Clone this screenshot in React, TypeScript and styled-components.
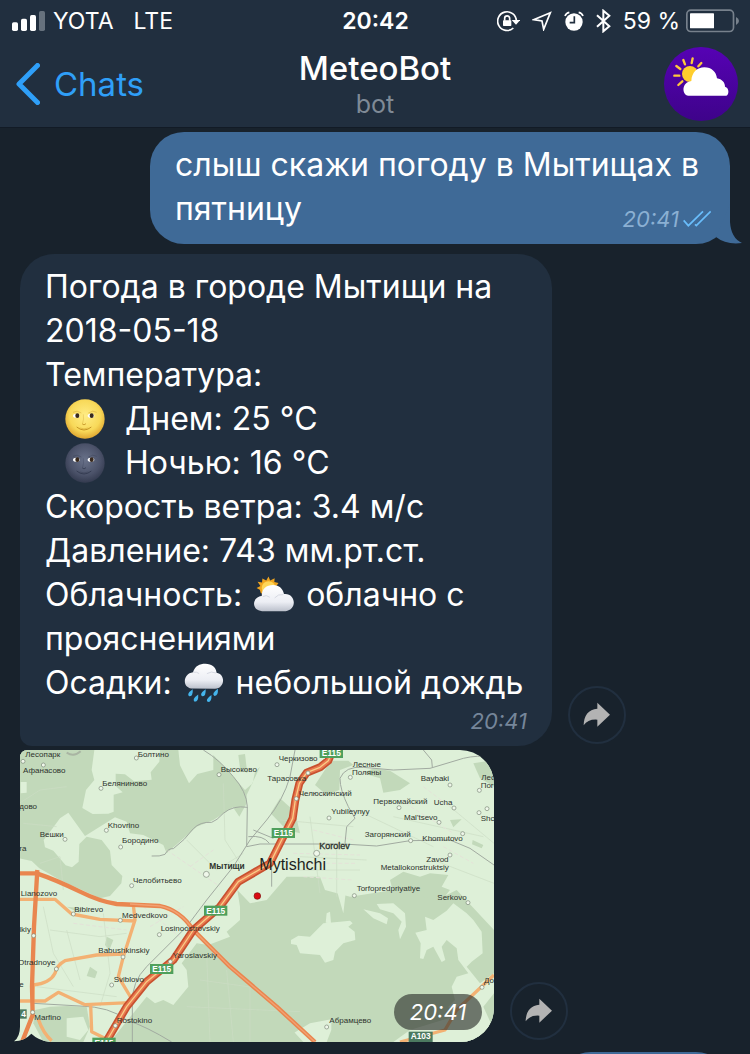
import React from "react";
import styled, { createGlobalStyle } from "styled-components";

const GlobalStyle = createGlobalStyle`
  * { box-sizing: border-box; }
  body {
    margin: 0;
    background: #18222c;
    color: #fff;
    font-family: Inter, "Noto Sans", sans-serif;
  }
  button { font: inherit; }
`;

const Screen = styled.div`
  display: flex;
  flex-direction: column;
  height: 100vh;
  overflow: hidden;
`;

const TopBar = styled.header`
  flex: none;
  background: #212f3f;
  border-bottom: 1px solid #121b26;
`;

const StatusBar = styled.div`
  display: grid;
  grid-template-columns: 1fr auto 1fr;
  align-items: center;
  height: 41px;
  padding: 0 11px 0 12px;
  font-size: 23px;
  line-height: 32px;
`;

const StatusGroup = styled.div<{ $end?: boolean }>`
  display: flex;
  align-items: center;
  justify-content: ${(p) => (p.$end ? "flex-end" : "flex-start")};
  gap: ${(p) => (p.$end ? 12 : 8)}px;
  white-space: nowrap;
`;

const Network = styled.span`
  margin-left: 12px;
`;

const Charge = styled.span`
  display: flex;
  align-items: center;
  gap: 6px;
`;

const Clock = styled.time`
  font-weight: 600;
`;

const NavBar = styled.nav`
  display: grid;
  grid-template-columns: 1fr auto 1fr;
  align-items: center;
  height: 86px;
  padding: 0 12px;
`;

const BackLink = styled.a`
  display: flex;
  align-items: center;
  gap: 14px;
  padding-left: 4px;
  color: #2f9ff8;
  font-size: 33px;
  line-height: 40px;
  text-decoration: none;
`;

const Heading = styled.div`
  text-align: center;
`;

const Title = styled.h1`
  margin: 0;
  font-size: 33px;
  line-height: 40px;
  font-weight: 500;
`;

const Subtitle = styled.p`
  margin: 0;
  color: #7f8a96;
  font-size: 25px;
  line-height: 32px;
`;

const AvatarButton = styled.button`
  justify-self: end;
  display: block;
  width: 74px;
  height: 74px;
  padding: 0;
  border: 0;
  border-radius: 50%;
  overflow: hidden;
  background: linear-gradient(#5602b4, #3e038a);
`;

const Chat = styled.main`
  flex: 1;
  min-height: 0;
  display: flex;
  flex-direction: column;
  padding: 4px 20px 0;
  overflow: hidden;
`;

const MessageRow = styled.div<{ $mine?: boolean; $gap?: number }>`
  flex: none;
  display: flex;
  align-items: flex-end;
  justify-content: ${(p) => (p.$mine ? "flex-end" : "flex-start")};
  gap: 16px;
  margin-bottom: ${(p) => p.$gap ?? 10}px;
`;

const Bubble = styled.article<{ $mine?: boolean; $width: number }>`
  position: relative;
  display: flex;
  flex-direction: column;
  width: ${(p) => p.$width}px;
  max-width: 84%;
  min-height: 80px;
  padding: 11px 0 11px 25px;
  border-radius: ${(p) => (p.$mine ? "34px" : "34px 34px 34px 12px")};
  background: ${(p) => (p.$mine ? "#3f6a97" : "#212f3f")};
`;

const Text = styled.p`
  margin: 0;
  font-size: 32px;
  line-height: 44px;
`;

const Line = styled.span<{ $indent?: boolean }>`
  display: flex;
  align-items: center;
  gap: ${(p) => (p.$indent ? 20 : 12)}px;
  padding-left: ${(p) => (p.$indent ? 20 : 0)}px;
  white-space: nowrap;
`;

const Meta = styled.div<{ $mine?: boolean }>`
  display: flex;
  align-items: center;
  align-self: flex-end;
  gap: 4px;
  margin-top: ${(p) => (p.$mine ? -26 : 2)}px;
  padding-right: ${(p) => (p.$mine ? 19 : 25)}px;
  color: ${(p) => (p.$mine ? "#8bb0d3" : "#76869a")};
  font-size: 22px;
  line-height: 28px;
  font-style: italic;
`;

const Tail = styled.svg`
  position: absolute;
  right: -12px;
  bottom: 0;
`;

const ShareButton = styled.button`
  flex: none;
  display: flex;
  align-items: center;
  justify-content: center;
  width: 58px;
  height: 58px;
  margin-bottom: 2px;
  padding: 0;
  border: 2px solid #212f3f;
  border-radius: 50%;
  background: transparent;
`;

const MapCard = styled.figure`
  position: relative;
  width: 480px;
  max-width: 80%;
  margin: 0 0 0 -6px;

  > svg { display: block; width: 100%; height: auto; }
`;

const MapTime = styled.time`
  position: absolute;
  right: 12px;
  bottom: 12px;
  width: 88px;
  border-radius: 18px;
  background: rgba(40, 44, 40, 0.62);
  font-size: 22px;
  line-height: 36px;
  font-style: italic;
  text-align: center;
`;

const Signal = () => (
  <svg width="33" height="20" viewBox="36 30 99 60" fill="#fff">
    <rect x="36" y="64" width="18" height="26" rx="5" />
    <rect x="63" y="53" width="18" height="37" rx="5" />
    <rect x="90" y="42" width="18" height="48" rx="5" />
    <rect x="117" y="30" width="18" height="60" rx="5" fill="#66717d" />
  </svg>
);

const RotationLock = () => (
  <svg width="23" height="22" viewBox="371 27 69 66">
    <path d="M429 60A28 28 0 1 0 420 81" fill="none" stroke="#fff" strokeWidth="5" />
    <path d="M415 57H441L428 71Z" fill="#fff" />
    <rect x="389" y="58" width="25" height="17" rx="2" fill="#fff" />
    <path d="M394 59V52a7.500 7.500 0 0 1 15 0V59" fill="none" stroke="#fff" strokeWidth="5" />
  </svg>
);

const Location = () => (
  <svg width="20" height="20" viewBox="479 32 60 60">
    <path d="M534 37L484 58L509 62L514 87Z" fill="none" stroke="#fff" strokeWidth="5" strokeLinejoin="miter" />
  </svg>
);

const Alarm = () => (
  <svg width="20" height="20" viewBox="574 30 60 60">
    <circle cx="604" cy="63" r="26" fill="#fff" />
    <path d="M577 45Q580 36 590 34M631 45Q628 36 618 34" fill="none" stroke="#fff" strokeWidth="5" />
    <path d="M605 46V65H591" fill="none" stroke="#212f3f" strokeWidth="5" />
  </svg>
);

const Bluetooth = () => (
  <svg width="15" height="24" viewBox="668 24 45 72">
    <path d="M671 43L708 76L690 91V29L708 44L671 77" fill="none" stroke="#fff" strokeWidth="6" />
  </svg>
);

const Battery = () => (
  <svg width="53" height="24" viewBox="933 26 159 72">
    <rect x="935.500" y="29.500" width="140" height="64" rx="12" fill="none" stroke="#77818c" strokeWidth="5" />
    <rect x="945" y="39" width="72" height="45" rx="2" fill="#fff" />
    <path d="M1083 50Q1092 55 1092 62Q1092 69 1083 74Z" fill="#77818c" />
  </svg>
);

const AvatarArt = () => (
  <svg width="74" height="74" viewBox="867 144 222 222">
    <circle cx="945" cy="225" r="24" fill="#ffce2e" />
    <path
      d="M930 196L925 183M950 192L953 178M970 202L979 192M916 210L904 201M913 230L898 230M922 247L910 258"
      stroke="#ffc93c"
      strokeWidth="7"
      strokeLinecap="round"
    />
    <path
      d="M940 290C920 288 919 250 949 246C950 220 967 205 988 205C1010 205 1024 219 1026 238C1041 240 1050 251 1050 263C1064 266 1062 289 1054 290Z"
      fill="#fff"
    />
  </svg>
);

const EmojiSvg = styled.svg`
  flex: none;
  width: 40px;
  height: 40px;
`;

const MoonFace = ({ night }: { night?: boolean }) => {
  const id = night ? "moonNight" : "moonDay";
  const line = night ? "#2f374c" : "#b98518";
  return (
    <EmojiSvg viewBox="0 0 120 120">
      <defs>
        <radialGradient id={id} cx="50%" cy="42%" r="56%">
          <stop offset="0" stopColor={night ? "#69728a" : "#ffed86"} />
          <stop offset=".7" stopColor={night ? "#4b5269" : "#f8d959"} />
          <stop offset="1" stopColor={night ? "#363d52" : "#e2ac35"} />
        </radialGradient>
      </defs>
      <circle cx="60" cy="60" r="59" fill={`url(#${id})`} />
      <path d="M24 40Q36 32 49 42M70 42Q84 32 95 40" fill="none" stroke={line} strokeWidth="2" opacity=".5" />
      <ellipse cx="34" cy="50" rx="10" ry="6" fill="#fff" />
      <ellipse cx="78" cy="50" rx="10" ry="6" fill="#fff" />
      <ellipse cx="37" cy="50" rx="6" ry="7" fill="#38291d" />
      <ellipse cx="80" cy="50" rx="6" ry="7" fill="#38291d" />
      <path d="M51 74Q57 81 63 74" fill="none" stroke={line} strokeWidth="3" opacity=".7" />
      <path d="M55 46Q57 62 53 72" fill="none" stroke={line} strokeWidth="2" opacity=".4" />
      <path d="M35 84Q57 102 79 84" fill="none" stroke={line} strokeWidth="3" opacity=".8" />
      <path d="M44 87Q57 92 70 87" fill="none" stroke={line} strokeWidth="2" opacity=".5" />
    </EmojiSvg>
  );
};

const CloudGradient = ({ id }: { id: string }) => (
  <linearGradient id={id} x1="0" y1="0" x2="0" y2="1">
    <stop offset="0" stopColor="#ffffff" />
    <stop offset=".65" stopColor="#eceef4" />
    <stop offset="1" stopColor="#bcc1cc" />
  </linearGradient>
);

const SunCloud = () => (
  <EmojiSvg viewBox="257 20 124 124">
    <defs><CloudGradient id="cloudA" /></defs>
    <path
      d="M302 25L307 37L321 30L320 42L333 45L325 56L333 68L290 82L278 76L275 66L265 60L277 54L268 41L282 43L283 31L295 37Z"
      fill="#f0a51f"
    />
    <circle cx="302" cy="60" r="21" fill="#ffd657" />
    <path
      d="M282 132C248 130 250 88 281 85C281 62 296 51 316 51C335 51 347 63 350 79C387 75 392 129 355 132Z"
      fill="url(#cloudA)"
    />
    <path d="M284 87Q295 80 306 89M321 91Q332 78 348 81" fill="none" stroke="#d4d8e1" strokeWidth="3" />
  </EmojiSvg>
);

const RainCloud = () => (
  <EmojiSvg viewBox="49 280 120 124">
    <defs><CloudGradient id="cloudB" /></defs>
    <path
      d="M70 359C40 355 44 313 75 309C80 289 96 282 113 282C134 282 146 293 148 310C177 315 174 359 143 360Z"
      fill="url(#cloudB)"
    />
    <path d="M76 309Q86 306 94 313M118 313Q132 304 146 311" fill="none" stroke="#d4d8e1" strokeWidth="3" />
    <g fill="#45b5ed">
      {[[66, 373], [106, 373], [144, 372], [83, 390], [124, 391]].map(([x, y]) => (
        <path key={x} d={`M${x + 8} ${y - 12}Q${x + 10} ${y + 10} ${x - 3} ${y + 10}Q${x - 13} ${y + 3} ${x + 8} ${y - 12}Z`} />
      ))}
    </g>
  </EmojiSvg>
);

const ShareArrow = () => (
  <svg width="28" height="26" viewBox="400 97 84 78">
    <path d="M443 99L481 135L443 171V150Q415 148 402 167Q403 121 443 117Z" fill="#b3b3b3" />
  </svg>
);

const Checks = () => (
  <svg width="28" height="18" viewBox="728 258 84 54">
    <path d="M730 289L744 305L788 262M764 301L768 305L811 262" fill="none" stroke="#69bdfb" strokeWidth="5" />
  </svg>
);

type Label = [string, number, number];

const towns: Label[] = [
  ["Лесопарк", 76, 52], ["Афанасово", 69, 98], ["Болтино", 413, 50], ["Высоково", 662, 97],
  ["Беляниново", 307, 137], ["дово", 58, 206], ["Khovrino", 323, 263], ["Вешки", 119, 291],
  ["Бородино", 366, 308], ["ra", 58, 333], ["Челобитьево", 399, 430], ["Lianozovo", 62, 467],
  ["Черкизово", 836, 62], ["Тарасовка", 802, 122], ["Лесные", 1058, 80], ["Поляны", 1056, 104],
  ["Челюскинский", 896, 167], ["Первомайский", 1120, 191], ["Baybaki", 1262, 122], ["Ucha", 1301, 195],
  ["Лес", 1444, 119], ["Пог", 1442, 143], ["Yubileynyy", 994, 222], ["Mal'tsevo", 1212, 239],
  ["Shc", 1442, 242], ["Загорянский", 1094, 290], ["Khomutovo", 1267, 304], ["Zavod", 1279, 367],
  ["Metallokonstruktsiy", 1142, 391], ["Torfopredpriyatiye", 1070, 454], ["Serkovo", 1312, 480],
  ["Bibirevo", 223, 515], ["Medvedkovo", 366, 533], ["Losinoostrovskiy", 482, 573], ["lkiy", 58, 577],
  ["Babushkinskiy", 295, 640], ["Yaroslavskiy", 518, 655], ["Otradnoye", 54, 675],
  ["Sviblovo", 341, 727], ["e", 58, 741], ["Marfino", 103, 839], ["Rostokino", 350, 849],
  ["Абрамцево", 988, 849], ["До", 1452, 730],
];

const dots: [number, number][] = [
  [69, 64], [130, 75], [409, 54], [657, 104], [303, 145], [319, 271], [195, 298], [362, 321], [395, 437],
  [831, 74], [924, 99], [889, 176], [1051, 112], [987, 234], [1197, 203], [1350, 135], [1362, 204],
  [1438, 151], [1461, 206], [1437, 218], [1317, 247], [1388, 281], [1232, 302], [1350, 345], [1063, 467],
  [1404, 488], [220, 522], [361, 541], [478, 584], [101, 587], [369, 651], [511, 665], [169, 687],
  [335, 735], [98, 817], [346, 857], [980, 861], [1446, 742],
];

const shields: Label[] = [["E115", 994, 39], ["E115", 850, 279], ["E115", 647, 512], ["E115", 485, 687], ["E115", 312, 908]];

const highway =
  "M998 30L985 62L960 82L920 98L898 130L886 180L878 235L845 300L810 370L750 405L715 425L660 500L580 570L520 660L440 725L380 800L318 906";

const TownMap = () => (
  <svg viewBox="42 30 1440 876" role="img" aria-label="Mytishchi">
    <defs>
      <clipPath id="cardShape">
        <path d="M60 54Q60 30 84 30H1380A102 102 0 0 1 1482 132V804A102 102 0 0 1 1380 906H150Q116 902 94 881Q74 903 42 904Q60 890 60 860Z" />
      </clipPath>
    </defs>
    <g clipPath="url(#cardShape)">
      <rect x="42" y="30" width="1440" height="876" fill="#def0d8" />
      <g fill="#c2d9ba">
        <path d="M42 30H283L275 90L283 120L258 150L247 204L278 222L325 221L341 215V164L368 157L347 138V101L375 103L402 124L455 119L452 97L478 65L480 30H535L540 76L567 130L592 102L640 90V45L690 100L735 150L758 130L765 95L780 80L740 165V190L718 230L699 202L640 240L590 260L500 340L490 315L430 285L390 280L380 245L345 232L255 288L205 218L180 235L150 275L131 300L135 322L160 332L197 376L216 382L236 365L238 312L260 290L305 300L330 332L335 375L367 408L364 430L330 468L300 475L180 420L118 385L95 363L42 352Z" />
        <path d="M715 45L735 42L742 100L720 85Z" />
        <path d="M978 85L1000 62L1045 62L1060 75L1020 90L1018 150L980 165L945 135Z" />
        <path d="M1090 100L1120 85L1170 92L1230 130L1200 150L1150 158L1140 115Z" />
        <path d="M840 175L885 215L900 280L860 270L812 220Z" />
        <path d="M1420 70L1482 60V140L1440 115Z" />
        <path d="M1350 240L1385 238L1360 262ZM1418 300L1450 315L1445 325L1416 313Z" />
        <path d="M1170 420L1210 395L1260 410L1290 400L1345 405L1325 440L1350 450L1310 500L1180 460Z" />
        <path d="M712 450L750 490L800 480L860 410L960 410L975 450L1050 470L1180 450L1310 480L1370 450L1482 570V906H980L994 870V838L930 850L880 880L790 800L590 610L625 615L690 590L680 575L720 540L720 500Z" />
        <path d="M545 670L590 610L780 765L910 906H330L440 770L465 790L490 780L520 795L565 740L560 690Z" />
        <path d="M105 810L150 800L200 798L260 800L270 860L250 906H130L100 850Z" />
        <path d="M270 680L292 695L285 715L260 708ZM320 590L340 600L328 630L315 615ZM200 500L245 505L240 520Z" />
      </g>
      <g fill="#def0d8">
        <path d="M873 600L895 587L930 590L970 550L1020 545L1050 542L1058 550L1045 560L1064 575L1066 600L1030 610L1005 635L1000 660L975 668L960 645L900 640L890 615L873 612Z" />
        <path d="M980 520L990 515L993 550L977 548ZM1010 450L1030 520L1038 450Z" />
        <path d="M1090 508L1140 520L1164 535L1160 553L1120 535ZM1130 492L1180 490L1215 520L1218 560L1200 598L1195 570L1205 545L1180 520L1140 508Z" />
        <path d="M1246 578L1280 570L1275 530L1300 540L1340 512L1360 490L1400 520L1420 540L1445 575L1448 640L1415 665L1400 680L1440 730L1482 700V760L1450 800L1482 870V906H1180L1230 870L1360 830L1345 800L1365 780L1355 740L1370 710L1405 700L1375 660L1370 625L1340 600L1325 620L1336 660L1325 666L1300 620L1280 630L1270 657L1260 655L1262 610Z" />
        <path d="M200 835L250 830L265 870L240 900L200 890ZM62 126H80V158L62 160Z" />
      </g>
      <g fill="none" stroke="#ccdcc4" strokeWidth="2">
        <path d="M42 200L120 150L200 140M70 250L170 260M120 370L180 350L190 450M670 130L675 300L720 370M560 300L650 390L730 340M900 350L1100 360M930 230L960 460M1010 330V470M870 390L1080 390M840 240L1060 260M1070 210L1300 320M1180 230L1450 290M1350 200L1482 310M1300 360L1482 430" />
        <path d="M600 720L780 745M560 800L900 815M620 640L630 906M680 690L700 906M750 740V906M150 570L300 590L380 580M130 500L160 640L220 740M200 570L240 720M310 520L330 700L300 800M110 740L350 770" />
      </g>
      <g fill="none" stroke="#e4e2d8" strokeWidth="3" strokeDasharray="12 7">
        <path d="M500 330L660 440M570 380L640 330M880 340L1080 345M920 370H1070M910 410L1060 420M940 270L1060 300M1200 180L1360 280M1270 140L1350 200M1330 320L1420 370M220 550L380 570M430 500L550 600M450 560L550 500" />
      </g>
      <g fill="none" stroke="#a1aaa0" strokeWidth="3">
        <path d="M610 30Q660 60 700 110Q740 155 742 200L740 320M742 202Q700 195 670 220Q650 242 635 247Q600 245 580 266Q555 300 520 326Q505 324 495 343Q480 350 455 348" />
        <path d="M885 30L870 110Q850 180 800 240L750 300L700 380L620 480L560 560L440 680Q395 725 397 790V906" />
        <path d="M740 320L780 312L1030 312L1130 318L1230 302L1350 300L1410 325L1482 375M745 290Q790 285 808 310M760 270L820 295" />
        <path d="M1270 30L1295 60L1297 82M1482 50Q1430 45 1390 55L1290 85L1180 90L1090 82Q1035 78 1020 115Q1020 150 1045 200L1065 235L1040 260L1035 310M815 440V380L840 320" />
        <path d="M100 790L240 798Q330 800 380 840Q440 860 515 906" />
      </g>
      <g fill="none" stroke="#f3b173" strokeWidth="10" strokeLinejoin="round">
        <path d="M42 478H165L215 522L300 538L405 543M400 495L405 540L370 650L355 710L397 780M370 642L290 645L195 662Q170 675 165 700Q150 730 100 735M42 783H135L175 757L255 794L390 788M272 795L275 875L325 900M115 838Q130 880 155 902M100 738L98 783" />
        <path d="M1482 705L1370 810L1335 870L1200 906" />
      </g>
      <g fill="none" stroke="#e9864f" strokeWidth="13" strokeLinejoin="round">
        <path d="M42 400H110Q170 420 240 455Q300 485 350 492L480 498Q540 510 580 570L690 680L830 800L945 906" />
        <path d="M112 390L102 560L96 740L98 825L66 906" />
      </g>
      <path d="M390 492L480 498Q540 510 580 570L690 680L830 800L945 906" fill="none" stroke="#f2a173" strokeWidth="4" />
      <g fill="none" strokeLinejoin="round">
        <path d={highway} stroke="#c8512f" strokeWidth="24" />
        <path d={highway} stroke="#e87850" strokeWidth="14" />
        <path d={highway} stroke="#f9ce87" strokeWidth="4" />
      </g>
      <path d="M200 38Q222 52 242 34" fill="none" stroke="#a9b5a3" strokeWidth="6" />
      <g fill="#eff7ea" stroke="#7c8878" strokeWidth="2">
        {dots.map(([x, y]) => <circle key={`${x}-${y}`} cx={x} cy={y} r="6" />)}
        <circle cx="619" cy="403" r="9" />
        <circle cx="950" cy="340" r="9" />
      </g>
      <g fill="#2d332d" fontFamily="Liberation Sans, Arial, sans-serif" fontSize="24">
        {towns.map(([name, x, y]) => <text key={`${name}-${x}`} x={x} y={y}>{name}</text>)}
        <text x="628" y="387" fontSize="25" fontWeight="700">Мытищи</text>
        <text x="958" y="328" fontSize="27" stroke="#2d332d" strokeWidth="1">Korolev</text>
        <text x="778" y="390" fontSize="48" fill="#1b1f1b">Mytishchi</text>
      </g>
      <g fontFamily="Liberation Sans, Arial, sans-serif" fontSize="25" fontWeight="700" fill="#fff" textAnchor="middle">
        {shields.map(([name, x, y]) => (
          <g key={`${x}-${y}`}>
            <rect x={x - 35} y={y - 15} width="70" height="30" fill="#4fa05c" />
            <text x={x} y={y + 9}>{name}</text>
          </g>
        ))}
        <rect x="1226" y="875" width="72" height="31" fill="#4c7a60" />
        <text x="1262" y="898">A103</text>
        <rect x="42" y="808" width="38" height="28" fill="#4c7a60" />
        <text x="71" y="831">4</text>
      </g>
      <circle cx="772" cy="468" r="10" fill="#d90b12" stroke="#7f1410" strokeWidth="2" />
    </g>
  </svg>
);

export default function App() {
  return (
    <Screen>
      <GlobalStyle />
      <TopBar>
        <StatusBar>
          <StatusGroup>
            <Signal />
            <span>YOTA</span>
            <Network>LTE</Network>
          </StatusGroup>
          <Clock>20:42</Clock>
          <StatusGroup $end>
            <RotationLock />
            <Location />
            <Alarm />
            <Bluetooth />
            <Charge>59 % <Battery /></Charge>
          </StatusGroup>
        </StatusBar>
        <NavBar>
          <BackLink href="#chats">
            <svg width="24" height="42" viewBox="0 0 24 42">
              <path d="M21.500 2.500L3 21L21.500 39.500" fill="none" stroke="#2f9ff8" strokeWidth="5" strokeLinecap="round" strokeLinejoin="round" />
            </svg>
            Chats
          </BackLink>
          <Heading>
            <Title>MeteoBot</Title>
            <Subtitle>bot</Subtitle>
          </Heading>
          <AvatarButton aria-label="MeteoBot">
            <AvatarArt />
          </AvatarButton>
        </NavBar>
      </TopBar>

      <Chat>
        <MessageRow $mine>
          <Bubble $mine $width={580}>
            <Text>
              <Line>слыш скажи погоду в Мытищах в</Line>
              <Line>пятницу</Line>
            </Text>
            <Meta $mine>
              <time>20:41</time>
              <Checks />
            </Meta>
            <Tail width="30" height="40" viewBox="712 204 30 40">
              <path d="M730 204V222Q731 238 742 243Q726 245 716 237Z" fill="#3f6a97" />
            </Tail>
          </Bubble>
        </MessageRow>

        <MessageRow $gap={4}>
          <Bubble $width={532}>
            <Text>
              <Line>Погода в городе Мытищи на</Line>
              <Line>2018-05-18</Line>
              <Line>Температура:</Line>
              <Line $indent><MoonFace />Днем: 25 °C</Line>
              <Line $indent><MoonFace night />Ночью: 16 °C</Line>
              <Line>Скорость ветра: 3.4 м/с</Line>
              <Line>Давление: 743 мм.рт.ст.</Line>
              <Line>Облачность: <SunCloud /> облачно с</Line>
              <Line>прояснениями</Line>
              <Line>Осадки: <RainCloud /> небольшой дождь</Line>
            </Text>
            <Meta><time>20:41</time></Meta>
          </Bubble>
          <ShareButton aria-label="Share"><ShareArrow /></ShareButton>
        </MessageRow>

        <MessageRow>
          <MapCard>
            <TownMap />
            <MapTime>20:41</MapTime>
          </MapCard>
          <ShareButton aria-label="Share"><ShareArrow /></ShareButton>
        </MessageRow>

        <MessageRow $mine>
          <Bubble $mine $width={173} />
        </MessageRow>
      </Chat>
    </Screen>
  );
}
